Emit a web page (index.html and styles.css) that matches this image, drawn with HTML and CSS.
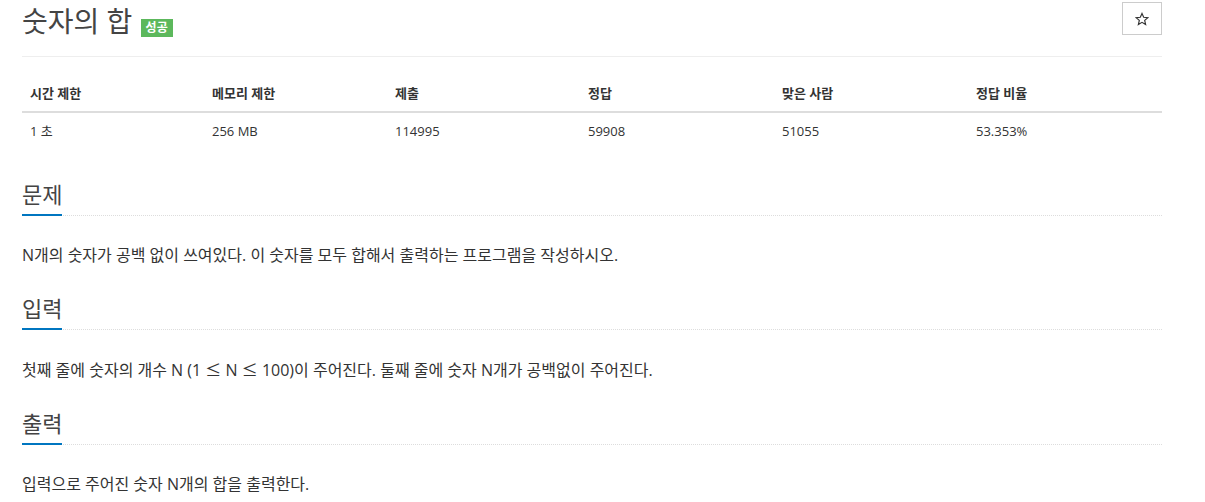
FILE: index.html
```html
<!DOCTYPE html>
<html lang="ko">
<head>
<meta charset="utf-8">
<title>숫자의 합</title>
<link rel="stylesheet" href="styles.css">
</head>
<body>
<div class="container">
  <div class="page-header">
    <h1 class="title">숫자의 합 <span class="badge">성공</span></h1>
    <button class="star-btn" type="button">
      <svg width="14" height="14" viewBox="0 0 24 24"><path d="M12 2.5l2.9 6.6 7.1.6-5.4 4.7 1.6 7-6.2-3.7-6.2 3.7 1.6-7L2 9.7l7.1-.6z" fill="none" stroke="#333" stroke-width="2" stroke-linejoin="miter"/></svg>
    </button>
  </div>

  <table class="info">
    <thead>
      <tr>
        <th class="c1">시간 제한</th>
        <th class="c2">메모리 제한</th>
        <th class="c3">제출</th>
        <th class="c4">정답</th>
        <th class="c5">맞은 사람</th>
        <th class="c6">정답 비율</th>
      </tr>
    </thead>
    <tbody>
      <tr>
        <td>1 초</td>
        <td>256 MB</td>
        <td>114995</td>
        <td>59908</td>
        <td>51055</td>
        <td>53.353%</td>
      </tr>
    </tbody>
  </table>

  <section class="problem-section">
    <h2 class="headline"><span>문제</span></h2>
    <p class="problem-text">N개의 숫자가 공백 없이 쓰여있다. 이 숫자를 모두 합해서 출력하는 프로그램을 작성하시오.</p>
  </section>

  <section class="problem-section">
    <h2 class="headline"><span>입력</span></h2>
    <p class="problem-text">첫째 줄에 숫자의 개수 N (1 <span class="sym">≤</span> N <span class="sym">≤</span> 100)이 주어진다. 둘째 줄에 숫자 N개가 공백없이 주어진다.</p>
  </section>

  <section class="problem-section">
    <h2 class="headline"><span>출력</span></h2>
    <p class="problem-text">입력으로 주어진 숫자 N개의 합을 출력한다.</p>
  </section>
</div>
</body>
</html>
```

FILE: styles.css
```css
* { box-sizing: border-box; }

body {
  margin: 0;
  background: #fff;
  color: #333;
  font-family: "Open Sans", "Noto Sans CJK KR", sans-serif;
  font-size: 14px;
}

.container {
  width: 1140px;
  margin-left: 22px;
}

.page-header {
  display: flex;
  justify-content: space-between;
  align-items: flex-start;
  height: 57px;
  border-bottom: 1px solid #eee;
}

.title {
  margin: 0;
  padding-top: 4px;
  font-size: 28px;
  font-weight: 400;
  line-height: 34px;
  color: #444;
}

.badge {
  display: inline-block;
  vertical-align: 0;
  background: #5cb85c;
  color: #fff;
  font-size: 12px;
  font-weight: 700;
  line-height: 18px;
  height: 18px;
  padding: 0 5px;
  margin-left: 1px;
}

.star-btn {
  margin-top: 2px;
  width: 40px;
  height: 33px;
  border: 1px solid #ccc;
  background: #fff;
  display: flex;
  align-items: center;
  justify-content: center;
  padding: 0;
}

.info {
  width: 100%;
  margin-top: 18px;
  border-collapse: collapse;
  font-size: 13px;
}

.info th,
.info td {
  text-align: left;
  padding: 8px;
  line-height: 20px;
}

.info th {
  font-weight: 700;
  border-bottom: 2px solid #ddd;
}

.c1 { width: 182px; }
.c2 { width: 183px; }
.c3 { width: 193px; }
.c4 { width: 194px; }
.c5 { width: 194px; }

.problem-section {
  margin-top: 33px;
}

.problem-section + .problem-section {
  margin-top: 29px;
}

.headline {
  margin: 0;
  font-size: 22px;
  font-weight: 400;
  line-height: 24px;
  color: #444;
  border-bottom: 1px dotted #ddd;
}

.headline span {
  display: inline-block;
  padding-bottom: 8px;
  border-bottom: 2px solid #0076c0;
  margin-bottom: -1px;
}

.problem-text {
  margin: 27px 0 0;
  font-size: 16px;
  line-height: 24px;
}

.sym {
  font-family: "Noto Sans CJK KR", sans-serif;
}
```
